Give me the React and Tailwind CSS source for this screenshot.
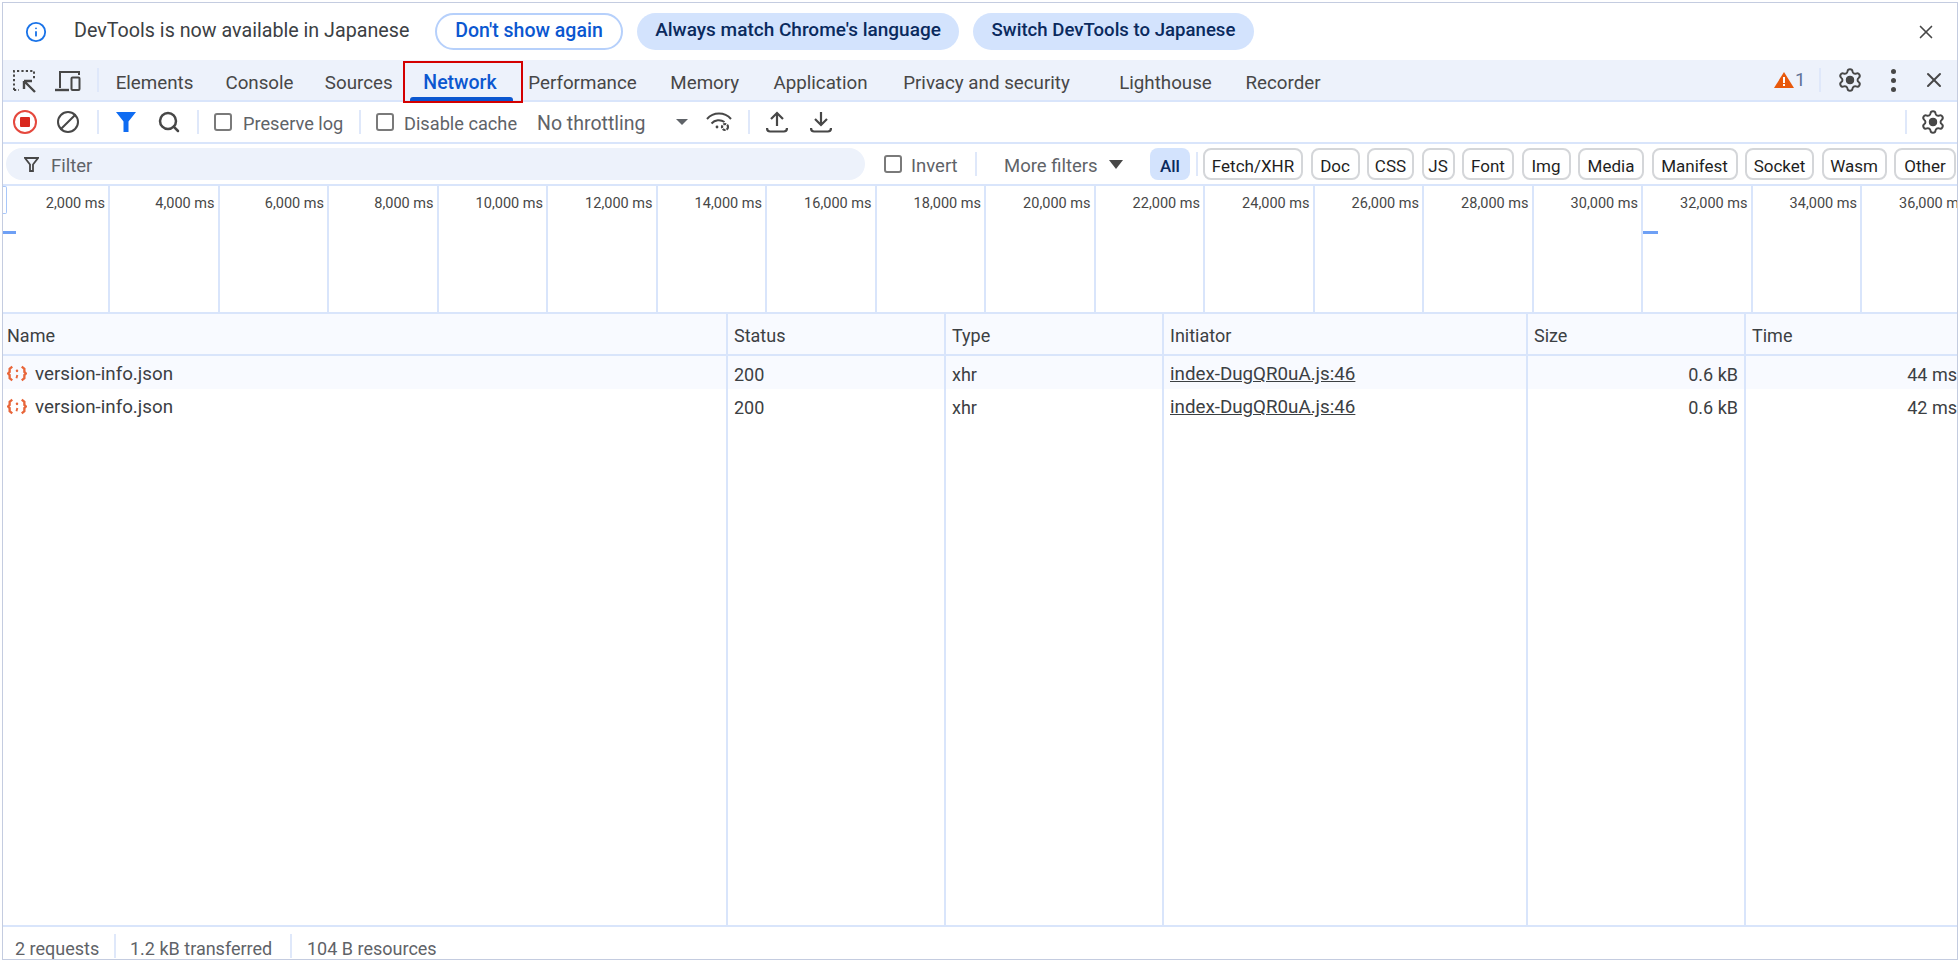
import React from 'react'
import { Ban, Info, Search, Settings, X } from 'lucide-react'

const TABS = [
  { label: 'Elements', w: 'w-[109px]' },
  { label: 'Console', w: 'w-[101px]' },
  { label: 'Sources', w: 'w-[97.5px]' },
  { label: 'Network', w: 'w-[105px]', active: true },
  { label: 'Performance', w: 'w-[140px]' },
  { label: 'Memory', w: 'w-[104.5px]' },
  { label: 'Application', w: 'w-[127px]' },
  { label: 'Privacy and security', w: 'w-[205px]' },
  { label: 'Lighthouse', w: 'w-[153px]' },
  { label: 'Recorder', w: 'w-[82px]' },
]

const CHIPS = [
  { label: 'Fetch/XHR', w: 'w-[100px]' },
  { label: 'Doc', w: 'w-[49px]' },
  { label: 'CSS', w: 'w-[47px]' },
  { label: 'JS', w: 'w-[33px]' },
  { label: 'Font', w: 'w-[52px]' },
  { label: 'Img', w: 'w-[49px]' },
  { label: 'Media', w: 'w-[66px]' },
  { label: 'Manifest', w: 'w-[86px]' },
  { label: 'Socket', w: 'w-[69px]' },
  { label: 'Wasm', w: 'w-[65px]' },
  { label: 'Other', w: 'w-[62px]' },
]

const TICKS = ['2,000', '4,000', '6,000', '8,000', '10,000', '12,000', '14,000', '16,000', '18,000', '20,000', '22,000', '24,000', '26,000', '28,000', '30,000', '32,000', '34,000', '36,000']

const REQUESTS = [
  { name: 'version-info.json', time: '44 ms', shaded: true },
  { name: 'version-info.json', time: '42 ms' },
]

const COLS = {
  name: 'w-[725px] border-r-2 border-[#d9e5fb]',
  status: 'w-[218px] border-r-2 border-[#d9e5fb]',
  type: 'w-[218px] border-r-2 border-[#d9e5fb]',
  initiator: 'w-[364px] border-r-2 border-[#d9e5fb]',
  size: 'w-[218px] border-r-2 border-[#d9e5fb]',
  time: 'flex-1',
}

const Sep = ({ className = '' }) => <div className={`w-[2px] h-[24px] bg-[#dfe8fa] shrink-0 ${className}`} />

const Gear = () => (
  <span className="relative flex items-center justify-center w-[26px] h-[26px]">
    <Settings size={26} strokeWidth={1.8} className="text-[#474747]" />
    <span className="absolute w-[8px] h-[8px] rounded-full bg-[#474747]" />
  </span>
)

const Check = () => <span className="block w-[18px] h-[18px] shrink-0 rounded-[3px] border-2 border-[#7a7a7a] bg-white" />

function InspectIcon() {
  return (
    <svg width="24" height="24" viewBox="0 0 24 24" fill="none" stroke="#474747" strokeWidth="2">
      <path d="M2 21V2h20v8" strokeDasharray="2.2 2.2" />
      <path d="M2 21h5" strokeDasharray="2.2 2.2" />
      <path d="M23 23l-11-11M12 12h8M12 12v8" strokeWidth="2.4" />
    </svg>
  )
}

function DeviceIcon() {
  return (
    <svg width="26" height="22" viewBox="0 0 26 22" fill="none" stroke="#474747" strokeWidth="2">
      <path d="M5 18V2h19v3" />
      <path d="M0 20h14" strokeWidth="2.4" />
      <rect x="16.5" y="7.5" width="8" height="12.5" rx="1" />
    </svg>
  )
}

function RecordIcon() {
  return (
    <svg width="26" height="26" viewBox="0 0 26 26">
      <circle cx="13" cy="13" r="11" fill="none" stroke="#e5483d" strokeWidth="2" />
      <rect x="8" y="8" width="10" height="10" rx="1" fill="#d9281e" />
    </svg>
  )
}

function WifiGearIcon() {
  return (
    <svg width="26" height="22" viewBox="0 0 26 22" fill="none" stroke="#474747" strokeWidth="2">
      <path d="M1 8a16 16 0 0 1 24 0" />
      <path d="M5.5 12.5a10 10 0 0 1 13-1.5" />
      <circle cx="11" cy="16" r="1.4" fill="#474747" stroke="none" />
      <circle cx="19" cy="16" r="3" strokeWidth="2.2" strokeDasharray="3 1" />
    </svg>
  )
}

function ArrowTray({ up }) {
  return (
    <svg width="22" height="22" viewBox="0 0 22 22" fill="none" stroke="#474747" strokeWidth="2.2">
      {up ? <path d="M11 15V2M5 8l6-6 6 6" /> : <path d="M11 1v13M5 8l6 6 6-6" />}
      <path d="M1 17c0 2.5 1 3.5 3 3.5h14c2 0 3-1 3-3.5" />
    </svg>
  )
}

function BracesIcon() {
  return (
    <svg width="20" height="17" viewBox="0 0 19 16" fill="none" stroke="#e8663a" strokeWidth="2.2" className="shrink-0 mt-[1px]">
      <path d="M5 1.5 2.5 3.5v3L1 8l1.5 1.5v3l2.5 2" />
      <path d="M14 1.5l2.500 2v3L18 8l-1.500 1.500v3L14 14.500" />
      <circle cx="9.500" cy="5.500" r="1.200" fill="#e8663a" stroke="none" />
      <path d="M9.800 9.500 9 12.500" strokeWidth="1.800" />
    </svg>
  )
}

function RequestRow({ name, time, shaded }) {
  return (
    <div className={`flex h-[33px] text-[18.750px] text-[#3c4043] shrink-0 ${shaded ? 'bg-[#f8faff]' : 'bg-white'}`}>
      <div className={`${COLS.name} flex items-center gap-[8px] pl-[4px]`}>
        <BracesIcon />
        <span className="pt-[4px]">{name}</span>
      </div>
      <div className={`${COLS.status} flex items-center pl-[6px] pt-[4px] text-[18px]`}>200</div>
      <div className={`${COLS.type} flex items-center pl-[6px] pt-[4px] text-[18px]`}>xhr</div>
      <div className={`${COLS.initiator} flex items-center pl-[6px] pt-[4px]`}>
        <span className="underline">index-DugQR0uA.js:46</span>
      </div>
      <div className={`${COLS.size} flex items-center justify-end pr-[6px] pt-[4px] text-[18px]`}>0.6 kB</div>
      <div className={`${COLS.time} flex items-center justify-end pt-[4px] text-[18px]`}>{time}</div>
    </div>
  )
}

export default function App() {
  return (
    <div className="h-screen bg-white pt-[2px] pl-[2px] overflow-hidden font-[Roboto,sans-serif] text-[#474747]">
      <div className="h-[958px] flex flex-col border-l border-t border-b border-r border-[#c4cce0] overflow-hidden">
        {/* Language infobar */}
        <div className="h-[57px] shrink-0 flex items-center">
          <Info size={22} strokeWidth={2} className="text-[#1a73e8] ml-[22px]" />
          <span className="ml-[27px] w-[336px] text-[19.700px] text-[#3c4043] pb-[2px]">DevTools is now available in Japanese</span>
          <button className="ml-[25px] w-[188px] h-[37px] pb-[2px] rounded-full border-2 border-[#b6d0fb] text-[19.500px] text-[#0b57d0] font-medium">Don't show again</button>
          <button className="ml-[14px] w-[322px] h-[37px] pb-[2px] rounded-full bg-[#d3e3fd] text-[19px] text-[#0a2a5e] font-medium">Always match Chrome's language</button>
          <button className="ml-[14px] w-[281px] h-[37px] pb-[2px] rounded-full bg-[#d3e3fd] text-[18.600px] text-[#0a2a5e] font-medium">Switch DevTools to Japanese</button>
          <X size={22} strokeWidth={1.8} className="ml-auto mr-[20px] text-[#474747]" />
        </div>

        {/* Panel tabs */}
        <div className="h-[42px] shrink-0 flex items-center bg-[#edf2fb] border-b-2 border-[#d9e5fb] text-[18.750px] text-[#474747]">
          <div className="w-[42px] flex justify-center mt-[2px]"><InspectIcon /></div>
          <div className="w-[45px] flex justify-center mt-[2px]"><DeviceIcon /></div>
          <Sep className="ml-[7px] mr-[1px]" />
          {TABS.map(t => (
            <div key={t.label} className={`relative ${t.w} h-full flex items-center justify-center shrink-0 ${t.active ? 'text-[#0b57d0] font-medium text-[19.500px]' : ''}`}>
              <span className="pt-[6px]">{t.label}</span>
              {t.active && <span className="absolute left-[2px] right-0 -bottom-[1px] h-[4px] rounded-t-[3px] bg-[#0b57d0]" />}
              {t.active && <span className="absolute -left-[5px] -right-[10px] top-[1px] -bottom-[3px] border-2 border-[#d40000]" />}
            </div>
          ))}
          <div className="ml-auto flex items-center">
            <svg width="20" height="16" viewBox="0 0 20 16">
              <path d="M10 0 20 16H0Z" fill="#e8590c" />
              <rect x="9" y="5" width="2" height="6" fill="#fff" />
              <rect x="9" y="12" width="2" height="2" fill="#fff" />
            </svg>
            <span className="ml-[1px] w-[17px] text-[#5f7396]">1</span>
            <Sep className="ml-[7px]" />
            <div className="w-[58px] flex justify-center"><Gear /></div>
            <div className="w-[28px] flex flex-col items-center gap-[4px]">
              <span className="w-[5px] h-[5px] rounded-full bg-[#474747]" />
              <span className="w-[5px] h-[5px] rounded-full bg-[#474747]" />
              <span className="w-[5px] h-[5px] rounded-full bg-[#474747]" />
            </div>
            <div className="w-[50px] pl-[15px]"><X size={24} strokeWidth={2} /></div>
          </div>
        </div>

        {/* Network toolbar */}
        <div className="h-[42px] shrink-0 flex items-center border-b-2 border-[#d9e5fb] text-[18.200px]">
          <div className="w-[43px] flex justify-center"><RecordIcon /></div>
          <div className="w-[44px] flex justify-center"><Ban size={24} strokeWidth={2} className="-scale-x-100" /></div>
          <Sep className="ml-[7px]" />
          <div className="w-[54px] flex justify-center">
            <svg width="20" height="20" viewBox="0 0 20 20"><path d="M0 0h20l-7.500 9.500V20h-5V9.500Z" fill="#0f6cf2" /></svg>
          </div>
          <div className="w-[32px] flex justify-center"><Search size={24} strokeWidth={2.500} /></div>
          <Sep className="ml-[12px]" />
          <div className="ml-[15px]"><Check /></div>
          <span className="ml-[11px] w-[101px] pt-[4px] text-[#5f6368] whitespace-nowrap">Preserve log</span>
          <Sep className="ml-[15px]" />
          <div className="ml-[15px]"><Check /></div>
          <span className="ml-[10px] w-[113px] pt-[4px] text-[#5f6368] whitespace-nowrap">Disable cache</span>
          <span className="ml-[20px] w-[109px] pt-[4px] text-[19.500px] text-[#5f6368] whitespace-nowrap">No throttling</span>
          <span className="ml-[30px] w-0 h-0 border-x-[6px] border-x-transparent border-t-[6px] border-t-[#5f6368]" />
          <div className="ml-[18px]"><WifiGearIcon /></div>
          <Sep className="ml-[16px]" />
          <div className="ml-[16px]"><ArrowTray up /></div>
          <div className="ml-[22px]"><ArrowTray /></div>
          <div className="ml-auto flex items-center">
            <Sep />
            <div className="w-[50px] pl-[13px]"><Gear /></div>
          </div>
        </div>

        {/* Filter bar */}
        <div className="h-[42px] shrink-0 flex items-center border-b-2 border-[#d9e5fb] text-[18.500px]">
          <div className="ml-[3px] w-[859px] h-[32px] rounded-full bg-[#edf2fb] flex items-center pl-[18px] text-[#5f6368]">
            <svg width="15" height="15" viewBox="0 0 15 15" fill="none" stroke="#474747" strokeWidth="1.800"><path d="M1 1h13L9 7.500V14H6V7.500Z" /></svg>
            <span className="ml-[12px] pt-[6px]">Filter</span>
          </div>
          <div className="ml-[19px]"><Check /></div>
          <span className="ml-[9px] w-[47px] pt-[6px] text-[#5f6368]">Invert</span>
          <Sep className="ml-[17px]" />
          <span className="ml-[27px] w-[95px] pt-[6px] text-[#5f6368] whitespace-nowrap">More filters</span>
          <span className="ml-[10px] w-0 h-0 border-x-[7px] border-x-transparent border-t-[9px] border-t-[#474747]" />
          <div className="ml-[27px] w-[40px] h-[32px] pt-[5px] rounded-[8px] bg-[#d3e3fd] flex items-center justify-center text-[17px] font-medium text-[#0a2a5e]">All</div>
          <Sep className="ml-[6px] mr-[5px]" />
          <div className="flex gap-[7.5px]">
            {CHIPS.map(c => (
              <div key={c.label} className={`${c.w} h-[32px] pt-[5px] shrink-0 rounded-[8px] border-2 border-[#d4d6d9] flex items-center justify-center text-[17px] text-[#1f1f1f]`}>{c.label}</div>
            ))}
          </div>
        </div>

        {/* Overview timeline */}
        <div className="relative h-[128px] shrink-0 flex border-b-2 border-[#d9e5fb] overflow-hidden">
          {TICKS.map((t, i) => (
            <div key={t} className={`${i === 0 ? 'w-[107px]' : 'w-[109.500px]'} shrink-0 h-full border-r-2 border-[#d9e5fb] text-right pr-[3px] pt-[9px] text-[14.500px] leading-[18px] whitespace-nowrap text-[#474747]`}>{t} ms</div>
          ))}
          <span className="absolute left-0 top-0 w-[4px] h-[28px] rounded-r-[2px] border border-l-0 border-[#a8c7fa]" />
          <span className="absolute left-0 top-[45px] w-[13px] h-[3px] bg-[#6ea0f5]" />
          <span className="absolute left-[1640px] top-[45px] w-[15px] h-[3px] bg-[#6ea0f5]" />
        </div>

        {/* Request table */}
        <div className="flex h-[42px] shrink-0 bg-[#f8faff] border-b-2 border-[#d9e5fb] text-[18px] text-[#3c4043]">
          <div className={`${COLS.name} flex items-center pl-[4px] pt-[3px]`}>Name</div>
          <div className={`${COLS.status} flex items-center pl-[6px] pt-[3px]`}>Status</div>
          <div className={`${COLS.type} flex items-center pl-[6px] pt-[3px]`}>Type</div>
          <div className={`${COLS.initiator} flex items-center pl-[6px] pt-[3px]`}>Initiator</div>
          <div className={`${COLS.size} flex items-center pl-[6px] pt-[3px]`}>Size</div>
          <div className={`${COLS.time} flex items-center pl-[6px] pt-[3px]`}>Time</div>
        </div>
        {REQUESTS.map((r, i) => <RequestRow key={i} {...r} />)}
        <div className="flex flex-1 min-h-0">
          <div className={COLS.name} />
          <div className={COLS.status} />
          <div className={COLS.type} />
          <div className={COLS.initiator} />
          <div className={COLS.size} />
          <div className={COLS.time} />
        </div>

        {/* Summary */}
        <div className="h-[34px] shrink-0 flex items-center border-t-2 border-[#d9e5fb] text-[18px] text-[#5f6368]">
          <span className="ml-[12px] w-[85px] pt-[11px]">2 requests</span>
          <Sep className="ml-[14px] mt-[6px]" />
          <span className="ml-[14px] w-[145px] pt-[11px] whitespace-nowrap">1.2 kB transferred</span>
          <Sep className="ml-[15px] mt-[6px]" />
          <span className="ml-[15px] pt-[11px]">104 B resources</span>
        </div>
      </div>
    </div>
  )
}
